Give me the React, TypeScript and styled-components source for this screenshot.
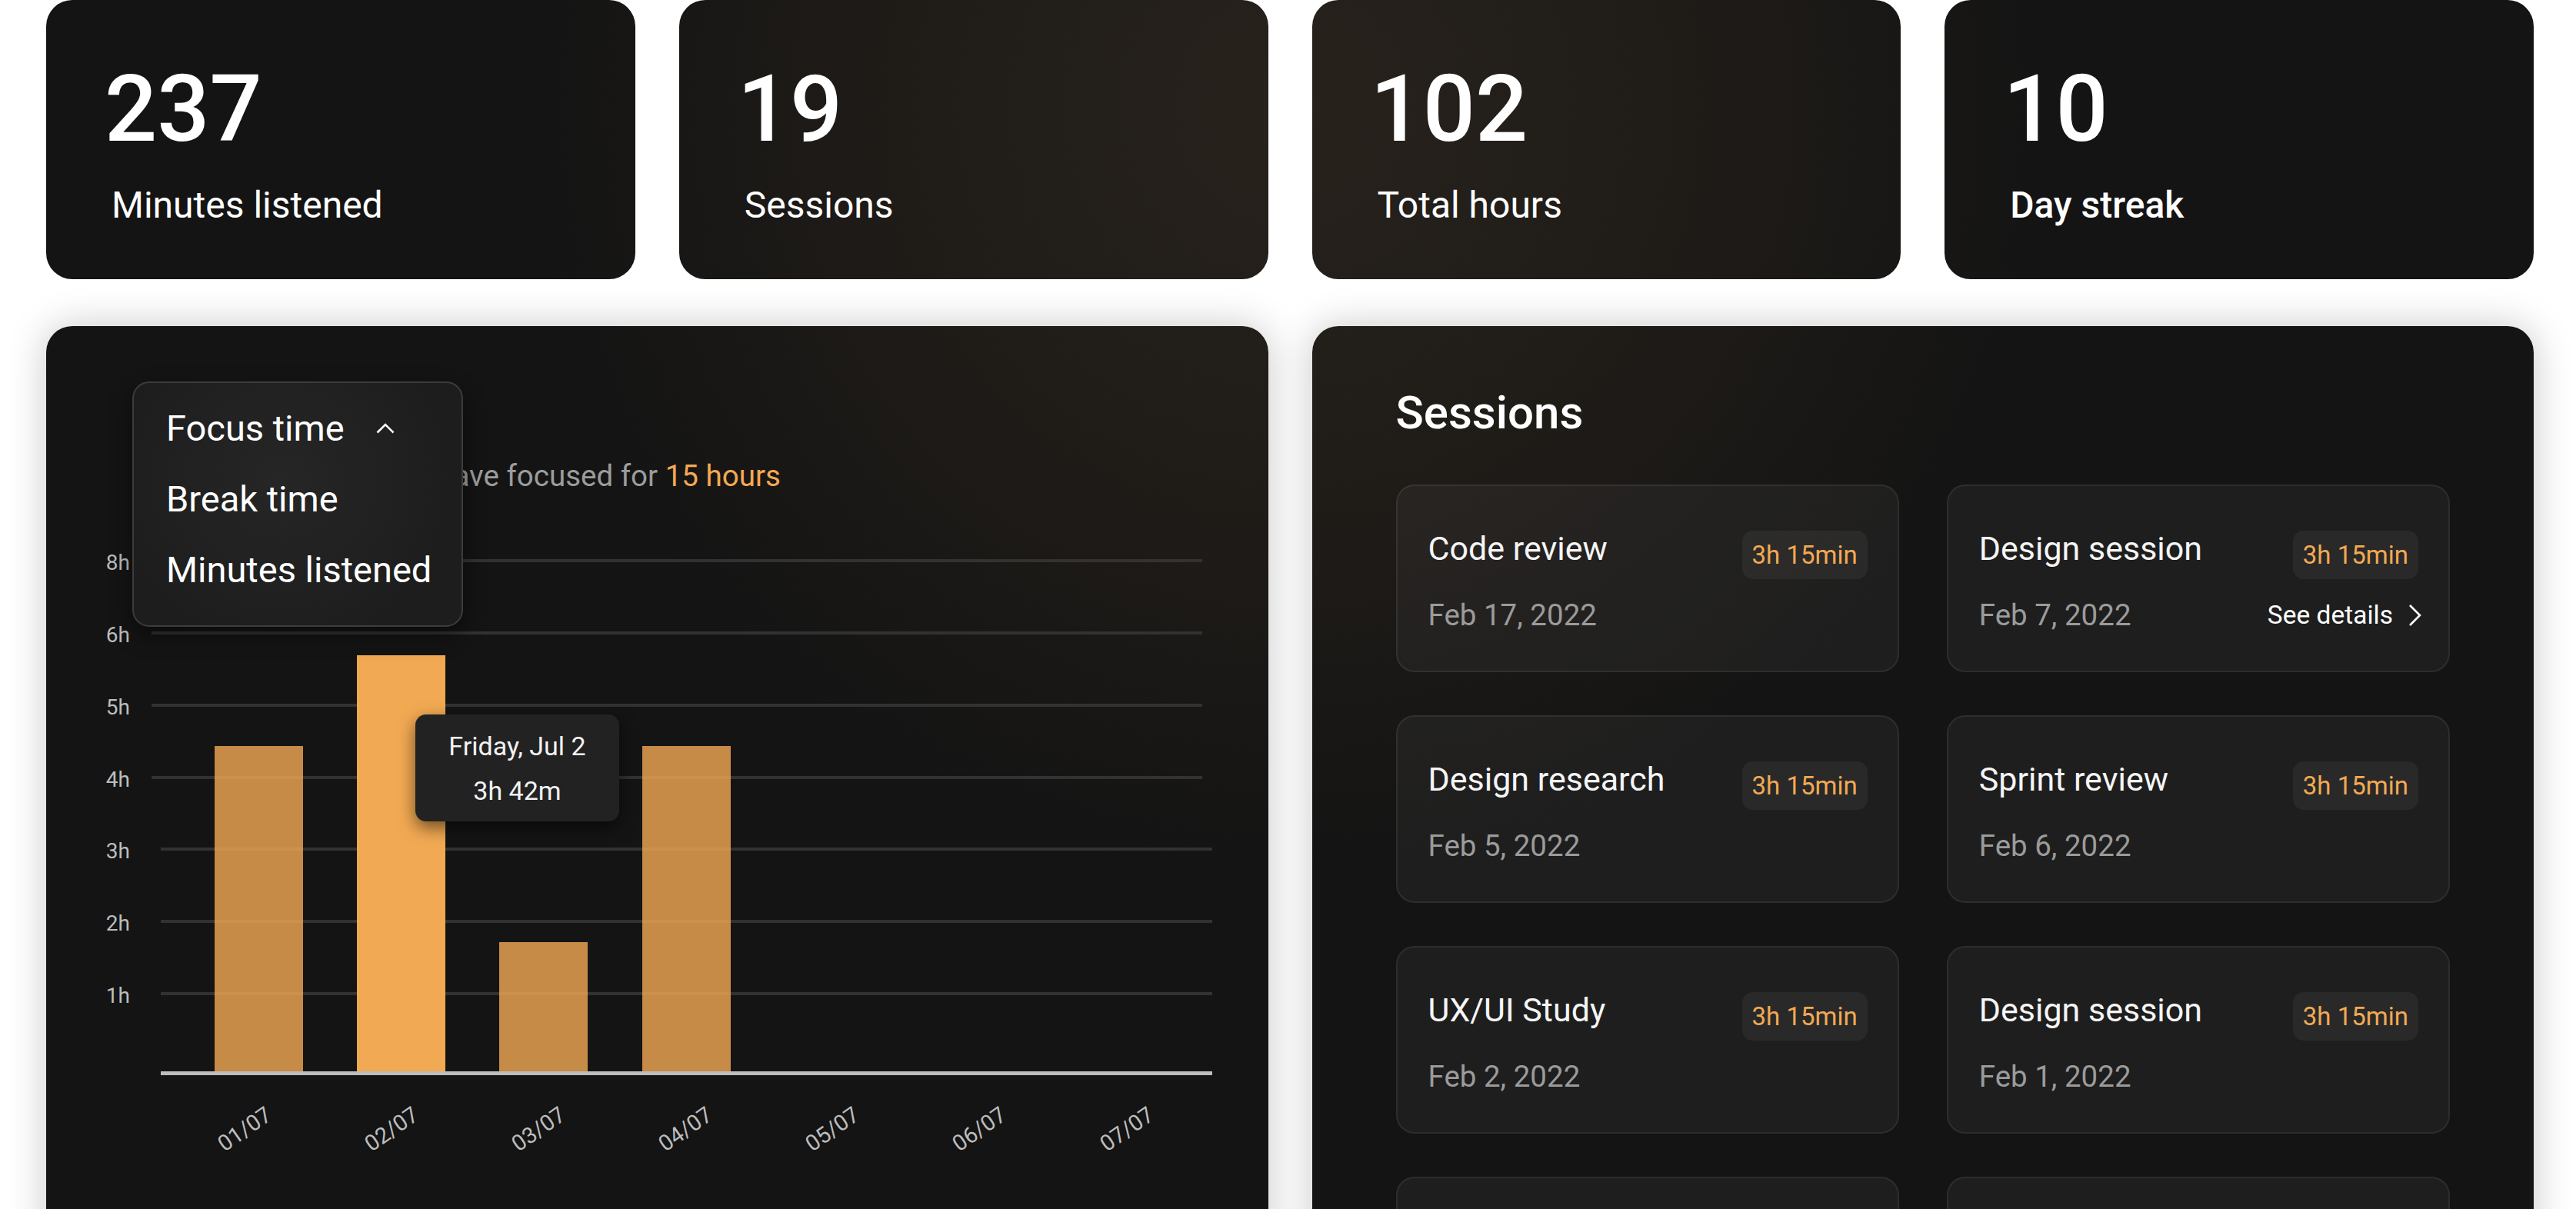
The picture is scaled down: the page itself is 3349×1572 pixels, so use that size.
import React from "react";
import styled, { createGlobalStyle } from "styled-components";

const GlobalStyle = createGlobalStyle`
  html, body { margin: 0; padding: 0; background: #ffffff; }
  body {
    font-family: Roboto, "Noto Sans", "Liberation Sans", sans-serif;
    -webkit-font-smoothing: antialiased;
  }
  * { box-sizing: border-box; }
`;

const surface = `radial-gradient(circle at 1680px 140px, #27221c 0px, #201c18 480px, #141414 1000px) fixed`;
const ORANGE = "#F2A953";

const Page = styled.main`
  display: flex;
  flex-direction: column;
  gap: 61px;
  padding: 0 55px 120px 60px;
`;

const StatsRow = styled.section`
  display: grid;
  grid-template-columns: repeat(4, 1fr);
  gap: 57px;
`;

const StatCard = styled.article`
  height: 363px;
  border-radius: 34px;
  background: ${surface};
  padding: 82px 0 0 85px;
  color: #ffffff;
  display: flex;
  flex-direction: column;
`;

const StatValue = styled.div`
  font-size: 120px;
  font-weight: 500;
  line-height: 120px;
  margin-left: -9px;
`;

const StatLabel = styled.div<{ $strong?: boolean }>`
  margin-top: 41px;
  font-size: 48px;
  line-height: 48px;
  font-weight: ${(p) => (p.$strong ? 500 : 400)};
`;

const PanelsRow = styled.section`
  display: grid;
  grid-template-columns: 1fr 1fr;
  gap: 57px;
  align-items: stretch;
`;

const Panel = styled.article`
  border-radius: 34px;
  background: ${surface};
  box-shadow: 0 0 50px rgba(0, 0, 0, 0.22);
  color: #ffffff;
  overflow: hidden;
`;

const ChartPanel = styled(Panel)`
  padding-top: 72px;
  position: relative;
`;

const ChartHeader = styled.header`
  padding-left: 112px;
`;

const SelectWrap = styled.div`
  position: relative;
`;

const SelectTrigger = styled.div`
  display: flex;
  align-items: center;
  height: 101px;
  padding: 15px 45px 0;
  font-size: 47px;
  line-height: 86px;
`;

const Menu = styled.ul`
  position: absolute;
  top: 0;
  left: 0;
  z-index: 3;
  width: 430px;
  height: 319px;
  margin: 0;
  padding: 13px 0 0 42px;
  list-style: none;
  border: 2px solid #3c3c3c;
  border-radius: 22px;
  background: radial-gradient(circle at 45% 40%, #262626 0%, #1d1d1d 75%);
  box-shadow: 0 12px 30px rgba(0, 0, 0, 0.45);
`;

const MenuItem = styled.li`
  display: flex;
  align-items: center;
  height: 92px;
  font-size: 47px;
  line-height: 92px;
  color: #ffffff;
`;

const ChevronUp = styled.svg`
  margin-left: 41px;
  display: block;
`;

const Subtitle = styled.p`
  margin: 0;
  padding-left: 27px;
  font-size: 38.5px;
  line-height: 44px;
  color: #9c9c9c;
  white-space: nowrap;
`;

const Accent = styled.span`
  color: ${ORANGE};
`;

const ChartArea = styled.div`
  position: relative;
  height: 960px;
`;

const ChartSvg = styled.svg`
  display: block;
  width: 1589px;
  height: 960px;
  font-family: Roboto, "Noto Sans", sans-serif;
`;

const Tooltip = styled.div`
  position: absolute;
  left: 480px;
  top: 288px;
  width: 265px;
  height: 139px;
  padding-top: 12px;
  border-radius: 14px;
  background: #222222;
  box-shadow: 0 8px 22px rgba(0, 0, 0, 0.55);
  color: #f2f2f2;
  text-align: center;
  font-size: 34px;
  line-height: 58px;
`;

const SessionsPanel = styled(Panel)`
  padding: 79px 109px 90px;
`;

const PanelTitle = styled.h2`
  margin: 0 0 59px;
  font-size: 60px;
  font-weight: 500;
  line-height: 68px;
`;

const SessionGrid = styled.div`
  display: grid;
  grid-template-columns: 1fr 1fr;
  gap: 56px 62px;
`;

const SessionCard = styled.div`
  height: 244px;
  border: 2px solid rgba(255, 255, 255, 0.07);
  border-radius: 24px;
  background: rgba(255, 255, 255, 0.045);
  padding: 58px 39px 0 40px;
  display: flex;
  flex-direction: column;
`;

const CardTop = styled.div`
  display: flex;
  justify-content: space-between;
  align-items: flex-start;
`;

const SessionTitle = styled.div`
  font-size: 43px;
  line-height: 47px;
  color: #f5f5f5;
`;

const Badge = styled.span`
  height: 63px;
  padding: 0 13px;
  border-radius: 14px;
  background: rgba(255, 255, 255, 0.05);
  color: ${ORANGE};
  font-size: 33px;
  line-height: 63px;
  white-space: nowrap;
`;

const CardBottom = styled.div`
  margin-top: 24px;
  height: 45px;
  display: flex;
  justify-content: space-between;
  align-items: center;
`;

const DateText = styled.span`
  font-size: 38.5px;
  line-height: 45px;
  color: #9b9b9b;
`;

const DetailsLink = styled.a`
  display: flex;
  align-items: center;
  gap: 20px;
  margin-right: -5px;
  font-size: 33.5px;
  line-height: 45px;
  color: #ffffff;
  text-decoration: none;
`;

const stats = [
  { value: "237", label: "Minutes listened" },
  { value: "19", label: "Sessions" },
  { value: "102", label: "Total hours" },
  { value: "10", label: "Day streak", strong: true },
];

const gridLines = [
  { label: "8h", y: 88, x1: 137, x2: 1503 },
  { label: "6h", y: 182, x1: 137, x2: 1503 },
  { label: "5h", y: 276, x1: 137, x2: 1503 },
  { label: "4h", y: 370, x1: 137, x2: 1503 },
  { label: "3h", y: 463, x1: 149, x2: 1516 },
  { label: "2h", y: 557, x1: 149, x2: 1516 },
  { label: "1h", y: 651, x1: 149, x2: 1516 },
];

const bars = [
  { x: 219, top: 329, active: false },
  { x: 404, top: 211, active: true },
  { x: 589, top: 584, active: false },
  { x: 775, top: 329, active: false },
];

const days = ["01/07", "02/07", "03/07", "04/07", "05/07", "06/07", "07/07"];
const dayCenters = [258, 449, 640, 831, 1022, 1213, 1405];

const sessions = [
  { title: "Code review", date: "Feb 17, 2022" },
  { title: "Design session", date: "Feb 7, 2022", details: true },
  { title: "Design research", date: "Feb 5, 2022" },
  { title: "Sprint review", date: "Feb 6, 2022" },
  { title: "UX/UI Study", date: "Feb 2, 2022" },
  { title: "Design session", date: "Feb 1, 2022" },
  { title: "Code review", date: "Jan 30, 2022" },
  { title: "Team sync", date: "Jan 28, 2022" },
];

function FocusChart() {
  const baseY = 752;
  return (
    <ChartSvg viewBox="0 0 1589 960">
      {gridLines.map((g) => (
        <g key={g.label}>
          <line x1={g.x1} x2={g.x2} y1={g.y} y2={g.y} stroke="#323232" strokeWidth={4} />
          <text x={109} y={g.y + 12} textAnchor="end" fontSize={28} fill="#bdbdbd">
            {g.label}
          </text>
        </g>
      ))}
      {bars.map((b) => (
        <rect
          key={b.x}
          x={b.x}
          y={b.top}
          width={115}
          height={baseY - b.top}
          fill={ORANGE}
          fillOpacity={b.active ? 1 : 0.8}
        />
      ))}
      <line x1={149} x2={1516} y1={754.5} y2={754.5} stroke="#bdbdbd" strokeWidth={5} />
      {days.map((d, i) => (
        <text
          key={d}
          x={dayCenters[i]}
          y={827}
          textAnchor="middle"
          dominantBaseline="central"
          fontSize={29}
          fill="#bdbdbd"
          transform={`rotate(-35 ${dayCenters[i]} 827)`}
        >
          {d}
        </text>
      ))}
    </ChartSvg>
  );
}

export default function App() {
  return (
    <>
      <GlobalStyle />
      <Page>
        <StatsRow>
          {stats.map((s) => (
            <StatCard key={s.label}>
              <StatValue>{s.value}</StatValue>
              <StatLabel $strong={s.strong}>{s.label}</StatLabel>
            </StatCard>
          ))}
        </StatsRow>
        <PanelsRow>
          <ChartPanel>
            <ChartHeader>
              <SelectWrap>
                <SelectTrigger>Focus time</SelectTrigger>
                <Menu>
                  <MenuItem>
                    Focus time
                    <ChevronUp width="24" height="14" viewBox="0 0 24 14">
                      <path d="M1.5 12.5 L12 2 L22.5 12.5" fill="none" stroke="#ffffff" strokeWidth="2.6" />
                    </ChevronUp>
                  </MenuItem>
                  <MenuItem>Break time</MenuItem>
                  <MenuItem>Minutes listened</MenuItem>
                </Menu>
              </SelectWrap>
              <Subtitle>
                In the last 7 days you have focused for <Accent>15 hours</Accent>
              </Subtitle>
            </ChartHeader>
            <ChartArea>
              <FocusChart />
              <Tooltip>
                <div>Friday, Jul 2</div>
                <div>3h 42m</div>
              </Tooltip>
            </ChartArea>
          </ChartPanel>
          <SessionsPanel>
            <PanelTitle>Sessions</PanelTitle>
            <SessionGrid>
              {sessions.map((s, i) => (
                <SessionCard key={i}>
                  <CardTop>
                    <SessionTitle>{s.title}</SessionTitle>
                    <Badge>3h 15min</Badge>
                  </CardTop>
                  <CardBottom>
                    <DateText>{s.date}</DateText>
                    {s.details && (
                      <DetailsLink href="#">
                        See details
                        <svg width="18" height="30" viewBox="0 0 18 30">
                          <path d="M2 2 L15 15 L2 28" fill="none" stroke="#ffffff" strokeWidth="2.6" />
                        </svg>
                      </DetailsLink>
                    )}
                  </CardBottom>
                </SessionCard>
              ))}
            </SessionGrid>
          </SessionsPanel>
        </PanelsRow>
      </Page>
    </>
  );
}
